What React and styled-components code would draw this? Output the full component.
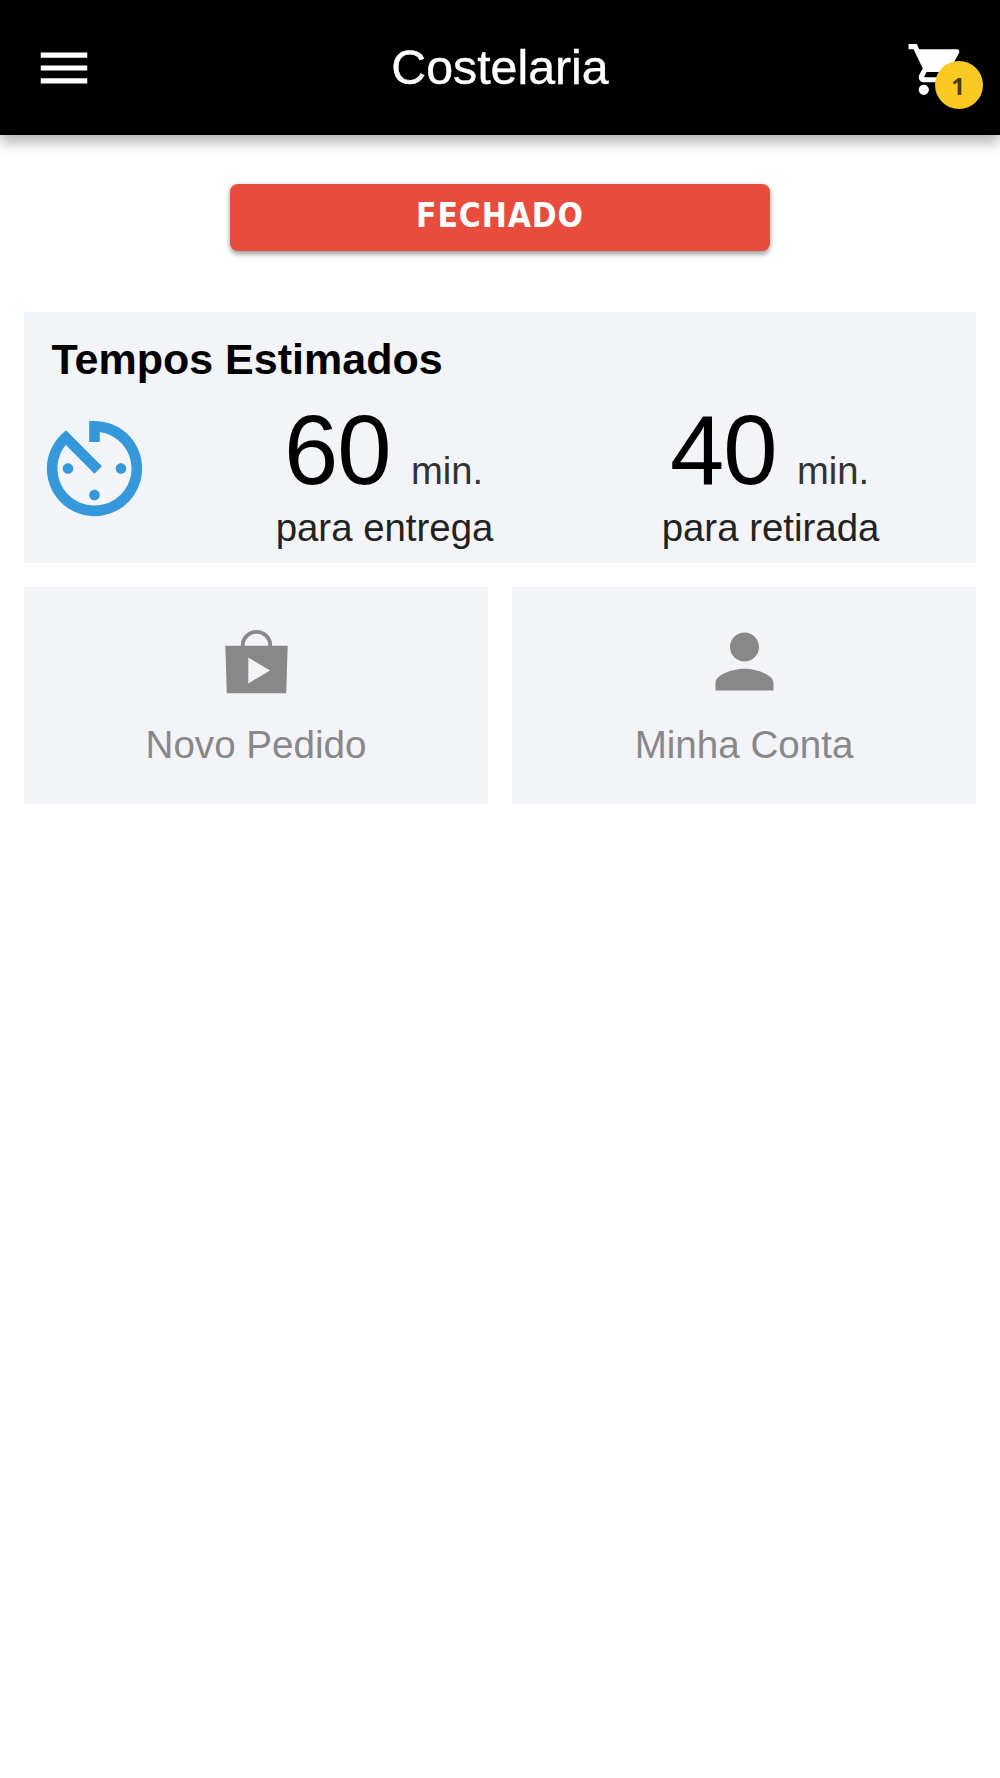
import React from "react";
import styled, { createGlobalStyle } from "styled-components";
import { MdAvTimer, MdMenu, MdPerson, MdShoppingCart } from "react-icons/md";

const BagIcon = () => (
  <svg width="87" height="87" viewBox="0 0 87 87" fill="currentColor">
    <path d="M29.7 29V27.6a13.8 13.8 0 0 1 27.6 0V29" fill="none" stroke="currentColor" strokeWidth="3.8" />
    <path d="M12.3 27.7h62.4l-1.5 47.6H13.8zM35.3 39.6v25.9L57 52.4z" fillRule="evenodd" />
  </svg>
);

const App = () => {
  return (
    <Page>
      <GlobalStyle />

      {/* Top bar */}
      <Header>
        <IconButton>
          <MdMenu size={62} />
        </IconButton>
        <Title>Costelaria</Title>
        <CartButton>
          <MdShoppingCart size={61} />
          <Badge>1</Badge>
        </CartButton>
      </Header>

      <Main>
        <Status>FECHADO</Status>

        {/* Estimated times */}
        <Times>
          <h2>Tempos Estimados</h2>
          <TimesRow>
            <MdAvTimer size={127} color="#3498db" />
            <Time>
              <Amount>
                60<small>min.</small>
              </Amount>
              <p>para entrega</p>
            </Time>
            <Time>
              <Amount>
                40<small>min.</small>
              </Amount>
              <p>para retirada</p>
            </Time>
          </TimesRow>
        </Times>

        {/* Shortcuts */}
        <Shortcuts>
          <Shortcut>
            <BagIcon />
            <span>Novo Pedido</span>
          </Shortcut>
          <Shortcut>
            <MdPerson size={87} />
            <span>Minha Conta</span>
          </Shortcut>
        </Shortcuts>
      </Main>
    </Page>
  );
};

export default App;

const GlobalStyle = createGlobalStyle`
  * {
    box-sizing: border-box;
  }

  body {
    margin: 0;
    background: #fff;
    font-family: "Liberation Sans", Arial, sans-serif;
  }

  svg {
    display: block;
    flex-shrink: 0;
  }
`;

const Page = styled.div`
  min-height: 1778px;
  background: #fff;
`;

const Header = styled.header`
  display: flex;
  justify-content: space-between;
  align-items: center;
  height: 135px;
  padding: 0 33px;
  background: #000;
  color: #fff;
  box-shadow: 0 8px 12px rgba(0, 0, 0, 0.28);
`;

const Title = styled.h1`
  margin: 0;
  padding: 0 1px 2px 0;
  font-size: 48.3px;
  font-weight: 400;
  line-height: 56px;
  -webkit-text-stroke: 0.4px #fff;
`;

const IconButton = styled.button`
  position: relative;
  padding: 0;
  border: none;
  background: none;
  color: #fff;
  cursor: pointer;
`;

const CartButton = styled(IconButton)`
  padding-top: 4px;
`;

const Badge = styled.span`
  position: absolute;
  top: 26px;
  left: 29px;
  width: 48px;
  height: 48px;
  padding-right: 2px;
  border-radius: 50%;
  background: #f9ca24;
  color: #4b3d0b;
  font: 700 24px / 49px "Open Sans", sans-serif;
  text-align: center;
`;

const Main = styled.main`
  display: flex;
  flex-direction: column;
  gap: 24.3px;
  padding: 48.6px 24px 0;
`;

const Status = styled.div`
  align-self: center;
  width: 540.5px;
  height: 67.6px;
  margin-bottom: 36.6px;
  border-radius: 8px;
  background: #e74c3c;
  color: #fff;
  font: 700 33.3px / 64px "DejaVu Sans Condensed", "DejaVu Sans", sans-serif;
  font-stretch: condensed;
  letter-spacing: 0.9px;
  text-align: center;
  box-shadow: 0 2.7px 8px rgba(0, 0, 0, 0.12), 0 2.7px 4px rgba(0, 0, 0, 0.3);
`;

const Times = styled.section`
  height: 250.7px;
  padding: 22px 12px 0;
  background: #f3f4f8;

  h2 {
    margin: 0 0 0 15.5px;
    font-size: 43px;
    line-height: 50px;
  }
`;

const TimesRow = styled.div`
  display: flex;
  align-items: center;
  height: 140px;
  margin-top: 14px;

  > svg {
    margin: 0 34px 0 -5px;
  }
`;

const Time = styled.div`
  flex: 1;
  padding-top: 11px;
  text-align: center;

  p {
    margin: 0;
    padding-right: 1px;
    color: #222;
    font-size: 38.4px;
    line-height: 45px;
  }
`;

const Amount = styled.div`
  padding-right: 3px;
  font-size: 97.6px;
  line-height: 108px;
  letter-spacing: -1px;
  color: #000;

  small {
    margin-left: 20.5px;
    color: #333;
    font-size: 38.2px;
    line-height: 0;
    letter-spacing: 0;
  }
`;

const Shortcuts = styled.nav`
  display: grid;
  grid-template-columns: 1fr 1fr;
  gap: 24px;
`;

const Shortcut = styled.a`
  display: flex;
  flex-direction: column;
  align-items: center;
  height: 217.3px;
  padding-top: 31px;
  background: #f3f4f8;
  color: #888;
  cursor: pointer;

  span {
    margin-top: 18px;
    font-size: 38.6px;
    line-height: 44px;
  }
`;
